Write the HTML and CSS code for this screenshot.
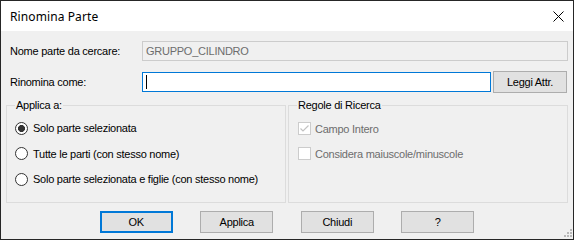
FILE: index.html
```html
<!DOCTYPE html>
<html>
<head>
  <title>Rinomina Parte</title>
  <link rel="stylesheet" href="styles.css">
</head>
<body>
  <div class="window">
    <div class="titlebar">
      <span class="title">Rinomina Parte</span>
      <svg class="close" width="11" height="11" viewBox="0 0 11 11">
        <path d="M0.5 0.5 L10.5 10.5 M10.5 0.5 L0.5 10.5" stroke="#000" stroke-width="1" fill="none"/>
      </svg>
    </div>

    <div class="content">
      <div class="row row-search">
        <span class="label">Nome parte da cercare:</span>
        <div class="field readonly">GRUPPO_CILINDRO</div>
      </div>

      <div class="row row-rename">
        <span class="label">Rinomina come:</span>
        <div class="field edit"><span class="caret"></span></div>
        <button class="btn btn-read">Leggi Attr.</button>
      </div>

      <!-- Group boxes -->
      <div class="groups">
        <fieldset class="group group-apply">
          <legend>Applica a:</legend>
          <div class="options">
            <label class="option"><span class="radio checked"></span>Solo parte selezionata</label>
            <label class="option"><span class="radio"></span>Tutte le parti (con stesso nome)</label>
            <label class="option"><span class="radio"></span>Solo parte selezionata e figlie (con stesso nome)</label>
          </div>
        </fieldset>

        <fieldset class="group group-rules">
          <legend>Regole di Ricerca</legend>
          <div class="options">
            <label class="option disabled">
              <span class="check">
                <svg width="11" height="11" viewBox="0 0 11 11"><path d="M1.5 5.5 L4 8 L9.5 2.5" stroke="#c2c2c2" stroke-width="1.2" fill="none"/></svg>
              </span>Campo Intero
            </label>
            <label class="option disabled"><span class="check"></span>Considera maiuscole/minuscole</label>
          </div>
        </fieldset>
      </div>

      <div class="buttons">
        <button class="btn btn-default">OK</button>
        <button class="btn">Applica</button>
        <button class="btn">Chiudi</button>
        <button class="btn">?</button>
      </div>
    </div>

    <svg class="grip" width="12" height="10" viewBox="0 0 12 10">
      <rect x="9" y="0" width="2" height="2" fill="#b8b8b8"/>
      <rect x="6" y="3" width="2" height="2" fill="#b8b8b8"/>
      <rect x="9" y="3" width="2" height="2" fill="#b8b8b8"/>
      <rect x="3" y="6" width="2" height="2" fill="#b8b8b8"/>
      <rect x="6" y="6" width="2" height="2" fill="#b8b8b8"/>
      <rect x="9" y="6" width="2" height="2" fill="#b8b8b8"/>
    </svg>
  </div>
</body>
</html>
```

FILE: styles.css
```css
body {
  margin: 0;
  background-color: #f0f0f0;
}

.window {
  position: relative;
  width: 574px;
  height: 240px;
  box-sizing: border-box;
  border: 1px solid #262626;
  background-color: #f0f0f0;
  font-family: "Liberation Sans", Arial, sans-serif;
  font-size: 11px;
  color: #000000;
}

.titlebar {
  height: 30px;
  background-color: #ffffff;
  display: flex;
  align-items: center;
  justify-content: space-between;
  padding: 0 9px 0 9px;
}

.title {
  font-family: "Noto Sans", "Liberation Sans", sans-serif;
  font-size: 12px;
  letter-spacing: 0.1px;
}

.content {
  padding: 10px 5px 0 5px;
  letter-spacing: -0.25px;
}

.row {
  display: flex;
  align-items: center;
  padding-left: 4px;
}

.row-search {
  height: 20px;
}

.row-rename {
  height: 22px;
  margin-top: 10px;
}

.label {
  width: 132px;
  flex-shrink: 0;
}

.field {
  height: 20px;
  box-sizing: border-box;
  border: 1px solid #cccccc;
}

.readonly {
  flex: 1;
  background-color: #f0f0f0;
  color: #6d6d6d;
  padding-left: 3px;
  line-height: 18px;
}

.edit {
  flex: 1;
  border-color: #0078d7;
  background-color: #ffffff;
  padding-left: 3px;
  display: flex;
  align-items: center;
}

.caret {
  width: 1px;
  height: 14px;
  background-color: #000000;
}

.btn {
  height: 22px;
  width: 73px;
  box-sizing: border-box;
  border: 1px solid #adadad;
  background-color: #e1e1e1;
  font-family: "Liberation Sans", Arial, sans-serif;
  font-size: 11px;
  letter-spacing: -0.25px;
  color: #000000;
  padding: 0;
}

.btn-read {
  width: 74px;
  margin-left: 2px;
  margin-right: 1px;
}

.btn-default {
  border: 2px solid #0078d7;
}

/* Group boxes */
.groups {
  display: flex;
  gap: 2px;
  margin-top: 6px;
}

.group {
  width: 280px;
  height: 104px;
  box-sizing: border-box;
  margin: 0;
  border: 1px solid #dcdcdc;
  padding: 0 8px;
}

.group legend {
  font-size: 11px;
  line-height: 12px;
  padding: 0 1px;
}

.group-rules {
  padding: 0 9px;
}

.group-rules legend {
  margin-left: -1px;
}

.options {
  display: flex;
  flex-direction: column;
}

.group-apply .options {
  padding-top: 10.5px;
  gap: 12.5px;
}

.group-rules .options {
  padding-top: 11px;
  gap: 12px;
}

.option {
  display: flex;
  align-items: center;
  height: 13px;
  white-space: nowrap;
}

.option.disabled {
  color: #6d6d6d;
}

.radio {
  width: 13px;
  height: 13px;
  box-sizing: border-box;
  border: 1px solid #333333;
  border-radius: 50%;
  background-color: #ffffff;
  margin-right: 5px;
  flex-shrink: 0;
}

.radio.checked {
  background: radial-gradient(circle, #333333 0 3.2px, #ffffff 3.8px);
}

.check {
  width: 13px;
  height: 13px;
  box-sizing: border-box;
  border: 1px solid #cccccc;
  background-color: #ffffff;
  margin-right: 4px;
  flex-shrink: 0;
  display: flex;
}

.buttons {
  display: flex;
  justify-content: center;
  gap: 27.5px;
  margin-top: 8px;
}

.grip {
  position: absolute;
  left: 560px;
  top: 228px;
}
```
